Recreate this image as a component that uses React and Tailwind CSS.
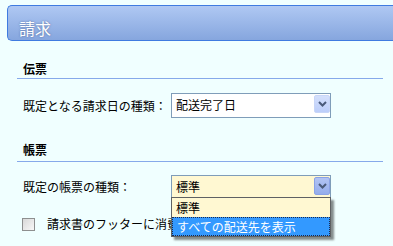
import React from "react";

function Chevron() {
  return (
    <svg width="9" height="6" viewBox="0 0 9 6" className="block">
      <path d="M1 1 L4.5 4.5 L8 1" fill="none" stroke="#4a5a7a" strokeWidth="2" />
    </svg>
  );
}

function SelectBox({ value, active }) {
  return (
    <div
      className={
        active
          ? "relative w-[160px] h-[24px] border border-[#7f9db9] bg-[#fff8d2]"
          : "relative w-[160px] h-[25px] border border-[#7f9db9] bg-white"
      }
    >
      <span className="absolute left-[4px] top-[3px] block text-[12px] leading-[16px] text-black">{value}</span>
      <div
        className={
          active
            ? "absolute right-0 top-[1px] w-[16px] h-[18px] rounded-[2px] border border-[#8aa2e6] bg-gradient-to-b from-[#b2c4f4] to-[#94acec] flex items-center justify-center"
            : "absolute right-0 top-[1px] w-[16px] h-[18px] rounded-[2px] border border-[#c8d6f8] bg-gradient-to-b from-[#d4e0fc] to-[#bccefa] flex items-center justify-center"
        }
      >
        <Chevron />
      </div>
    </div>
  );
}

function SectionTitle({ children, bottom }) {
  return (
    <div className={`ml-[17px] w-[366px] border-b border-[#86a9ea] pl-[6px] text-[12px] leading-[16px] ${bottom}`}>
      <span className="block font-bold text-black">{children}</span>
    </div>
  );
}

export default function App() {
  return (
    <div
      className="relative w-[393px] h-[246px] overflow-hidden bg-[#f0ffff] text-[12px] leading-[16px]"
      style={{ fontFamily: '"Noto Sans CJK JP", "Noto Sans", sans-serif' }}
    >
      <div className="pt-[5px] pl-[7px]">
        <div className="h-[36px] w-[400px] rounded-l-[5px] border border-r-0 border-[#3f7be0] bg-gradient-to-b from-[#afc8f3] to-[#86a6de] pl-[11px] pt-[12px] text-[16px] leading-[20px]">
          <span className="block text-white [text-shadow:0_0_2px_rgba(40,60,110,0.6)]">請求</span>
        </div>
      </div>

      <div className="mt-[20px]">
        <SectionTitle bottom="pb-[1px]">伝票</SectionTitle>
      </div>

      <div className="mt-[14px] flex items-center pl-[23px]">
        <span className="block w-[148px] text-black">既定となる請求日の種類：</span>
        <SelectBox value="配送完了日" />
      </div>

      <div className="mt-[24px]">
        <SectionTitle bottom="pb-[3px]">帳票</SectionTitle>
      </div>

      <div className="mt-[13px] flex items-center pl-[23px]">
        <span className="block w-[148px] text-black">既定の帳票の種類：</span>
        <SelectBox value="標準" active />
      </div>

      <div className="mt-[17px] flex items-center pl-[22px]">
        <div className="w-[13px] h-[13px] border border-[#8e8f8f] bg-gradient-to-br from-[#d8d8d8] to-[#f8f8f8]" />
        <span className="block ml-[12px] text-black whitespace-nowrap">請求書のフッターに消費税の内訳を表示する</span>
      </div>

      <div className="absolute left-[171px] top-[197px] w-[160px] border border-[#5f6163] bg-[#fff8d2] shadow-[3px_3px_2px_rgba(0,0,0,0.45)]">
        <div className="h-[19px] pl-[4px] leading-[19px] text-black">標準</div>
        <div className="h-[19px] pl-[4px] leading-[17px] text-white bg-[#3399ff] border border-dotted border-[#1a2a50]">
          すべての配送先を表示
        </div>
      </div>
    </div>
  );
}
